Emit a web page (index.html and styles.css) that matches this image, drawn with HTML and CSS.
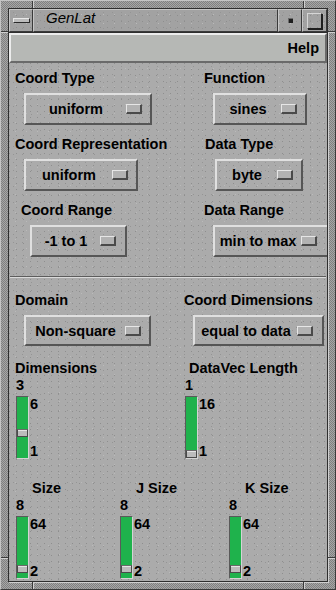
FILE: index.html
```html
<!DOCTYPE html>
<html lang="en">
<head>
	<meta charset="UTF-8">
	<title>GenLat</title>
	<link rel="stylesheet" href="styles.css">
</head>
<body>
<div class="window">
	<!-- resize handle marks on the frame -->
	<span class="notch notch-v nt-l"></span>
	<span class="notch notch-v nt-r"></span>
	<span class="notch notch-v nb-l"></span>
	<span class="notch notch-v nb-r"></span>
	<span class="notch notch-h nl-t"></span>
	<span class="notch notch-h nl-b"></span>
	<span class="notch notch-h nr-t"></span>
	<span class="notch notch-h nr-b"></span>

	<div class="titlebar">
		<div class="tb-item tb-menu"><span class="tb-bar"></span></div>
		<div class="tb-item tb-title">GenLat</div>
		<div class="tb-item tb-min"><span class="tb-dot"></span></div>
		<div class="tb-item tb-max"><span class="tb-box"></span></div>
	</div>

	<div class="client">
		<div class="menubar"><span class="menu-item">Help</span></div>

		<div class="panel">
			<div class="pair">
				<div class="field f-ctype">
					<div class="label">Coord Type</div>
					<div class="opt"><span class="opt-text">uniform</span><span class="ind"></span></div>
				</div>
				<div class="field f-func">
					<div class="label">Function</div>
					<div class="opt"><span class="opt-text">sines</span><span class="ind"></span></div>
				</div>
			</div>

			<div class="pair">
				<div class="field f-crep">
					<div class="label">Coord Representation</div>
					<div class="opt"><span class="opt-text">uniform</span><span class="ind"></span></div>
				</div>
				<div class="field f-dtype">
					<div class="label">Data Type</div>
					<div class="opt"><span class="opt-text">byte</span><span class="ind"></span></div>
				</div>
			</div>

			<div class="pair">
				<div class="field f-crange">
					<div class="label">Coord Range</div>
					<div class="opt"><span class="opt-text">-1 to 1</span><span class="ind"></span></div>
				</div>
				<div class="field f-drange">
					<div class="label">Data Range</div>
					<div class="opt"><span class="opt-text">min to max</span><span class="ind"></span></div>
				</div>
			</div>

			<div class="sep"></div>

			<div class="pair pair-after-sep">
				<div class="field f-domain">
					<div class="label">Domain</div>
					<div class="opt"><span class="opt-text">Non-square</span><span class="ind"></span></div>
				</div>
				<div class="field f-cdim">
					<div class="label">Coord Dimensions</div>
					<div class="opt"><span class="opt-text">equal to data</span><span class="ind"></span></div>
				</div>
			</div>

			<div class="pair-scales">
				<div class="sfield f-dims">
					<div class="label">Dimensions</div>
					<div class="sval">3</div>
					<div class="scale">
						<div class="trough"><span class="thumb" style="bottom:21px"></span></div>
						<div class="smarks"><span>6</span><span>1</span></div>
					</div>
				</div>
				<div class="sfield f-dvec">
					<div class="label">DataVec Length</div>
					<div class="sval">1</div>
					<div class="scale">
						<div class="trough"><span class="thumb" style="bottom:0px"></span></div>
						<div class="smarks"><span>16</span><span>1</span></div>
					</div>
				</div>
			</div>

			<div class="trio">
				<div class="sfield f-isize">
					<div class="label">Size</div>
					<div class="sval">8</div>
					<div class="scale">
						<div class="trough"><span class="thumb" style="bottom:5px"></span></div>
						<div class="smarks"><span>64</span><span>2</span></div>
					</div>
				</div>
				<div class="sfield f-jsize">
					<div class="label">J Size</div>
					<div class="sval">8</div>
					<div class="scale">
						<div class="trough"><span class="thumb" style="bottom:5px"></span></div>
						<div class="smarks"><span>64</span><span>2</span></div>
					</div>
				</div>
				<div class="sfield f-ksize">
					<div class="label">K Size</div>
					<div class="sval">8</div>
					<div class="scale">
						<div class="trough"><span class="thumb" style="bottom:5px"></span></div>
						<div class="smarks"><span>64</span><span>2</span></div>
					</div>
				</div>
			</div>
		</div>
	</div>
</div>
</body>
</html>
```

FILE: styles.css
```css
*{margin:0;padding:0;box-sizing:border-box;}
html,body{width:336px;height:590px;overflow:hidden;}
body{background:#8c8c8c;font:bold 14.5px/16px "Liberation Sans",Arial,sans-serif;color:#000;}

/* window frame */
.window{position:relative;width:336px;height:590px;padding:7px;border:1px solid;border-color:#c4c4c4 #3c3c3c #3c3c3c #c4c4c4;background:repeating-conic-gradient(#a6a6a6 0 25%,#808080 0 50%) 0 0/2px 2px;}
.notch{position:absolute;background:#3a3a3a;}
.notch-v{width:1px;height:7px;box-shadow:1px 0 0 #d0d0d0;}
.notch-h{width:7px;height:1px;box-shadow:0 1px 0 #d0d0d0;}
.nt-l{top:0;left:31px;}
.nt-r{top:0;left:302px;}
.nb-l{bottom:0;left:31px;}
.nb-r{bottom:0;left:302px;}
.nl-t{left:0;top:30px;}
.nl-b{left:0;top:556px;}
.nr-t{right:0;top:30px;}
.nr-b{right:0;top:556px;}

/* stipple used by title bar and panel */
.titlebar,.panel{background:
	conic-gradient(at 1px 1px,#0000 75%,#8e8e8e 0) 0 0/7px 6px,
	conic-gradient(at 1px 1px,#0000 75%,#959595 0) 4px 3px/9px 8px,
	conic-gradient(at 1px 1px,#0000 75%,#bababa 0) 6px 5px/11px 9px,
	#ababab;}

/* title bar */
.titlebar{display:flex;height:24px;border:1px solid #2e2e2e;border-bottom:0;background-color:#a2a2a2;}
.tb-item{border:1px solid;border-color:#c6c6c6 #3a3a3a #3a3a3a #c6c6c6;display:flex;align-items:center;justify-content:center;}
.tb-menu{width:24px;}
.tb-bar{width:17px;height:5px;background:#bdbdbd;border:1px solid;border-color:#e8e8e8 #2a2a2a #2a2a2a #e8e8e8;}
.tb-title{flex:1;justify-content:flex-start;align-items:flex-start;padding-left:12px;font:italic 15px/16px "Liberation Sans",Arial,sans-serif;}
.tb-min{width:24px;}
.tb-dot{width:5px;height:5px;background:#1e1e1e;border-top:1px solid #6a6a6a;border-left:1px solid #6a6a6a;}
.tb-max{width:25px;}
.tb-box{width:15px;height:16px;border:1px solid;border-color:#d6d6d6 #1e1e1e #1e1e1e #d6d6d6;box-shadow:1px 1px 0 #1e1e1e;}

/* client area */
.client{display:flex;flex-direction:column;height:550px;border:1px solid #2e2e2e;box-shadow:1px 1px 0 #cfcfcf;}
.menubar{flex:none;height:30px;display:flex;justify-content:flex-end;align-items:center;padding-right:6px;background:#b6b8b5;border:2px solid;border-color:#ececec #6a6a6a #6a6a6a #ececec;}

.panel{flex:1;overflow:hidden;padding:7px 0 0 6px;}

/* option menus */
.pair{display:grid;grid-template-columns:169px minmax(0,1fr);}
.pair + .pair{margin-top:11px;}
.field{display:flex;flex-direction:column;align-items:flex-start;gap:7px;}
.label{white-space:nowrap;}
.opt{flex:none;display:flex;align-items:center;height:32px;padding-right:8px;border:2px solid;border-color:#e0e0e0 #565656 #565656 #e0e0e0;white-space:nowrap;}
.opt-text{flex:1;text-align:center;}
.ind{flex:none;width:16px;height:10px;background:#b2b2b2;border-style:solid;border-width:1px 2px 2px 1px;border-color:#e6e6e6 #4a4a4a #4a4a4a #e6e6e6;}

.f-ctype .opt{margin-left:9px;width:128px;}
.f-func .label{margin-left:20px;}
.f-func .opt{margin-left:29px;width:94px;}
.f-crep .opt{margin-left:9px;width:114px;}
.f-dtype .label{margin-left:21px;}
.f-dtype .opt{margin-left:31px;width:88px;}
.f-crange .label{margin-left:6px;}
.f-crange .opt{margin-left:15px;width:97px;padding-right:9px;}
.f-drange .label{margin-left:20px;}
.f-drange .opt{margin-left:29px;width:116px;padding-right:10px;}
.f-domain .opt{margin-left:9px;width:127px;height:31px;}
.f-cdim .opt{margin-left:9px;width:131px;height:31px;padding-right:9px;}

.sep{height:2px;margin:19px 1px 0 -5px;border-top:1px solid #5c5c5c;border-bottom:1px solid #dadada;}
.pair.pair-after-sep{margin-top:14px;}

/* scales */
.pair-scales{display:grid;grid-template-columns:170px 1fr;margin-top:14px;}
.trio{display:grid;grid-template-columns:105px 109px 1fr;margin-top:21px;}
.sfield{display:flex;flex-direction:column;align-items:flex-start;}
.sval{margin:1px 0 3px;}
.scale{display:flex;}
.trough{position:relative;width:13px;height:63px;background:#1fb24c;border:1px solid;border-color:#5a5a5a #d4d4d4 #d4d4d4 #5a5a5a;}
.thumb{position:absolute;left:0;right:0;height:8px;background:#bcbcbc;border:1px solid #4a4a4a;border-top-color:#6a6a6a;box-shadow:inset 0 1px 0 #e4e4e4;}
.smarks{display:flex;flex-direction:column;justify-content:space-between;margin-left:1px;}

.f-dims .sval,.f-dims .scale{margin-left:1px;}
.f-dvec .label{margin-left:4px;}
.f-isize .label{margin-left:17px;}
.f-isize .sval,.f-isize .scale{margin-left:1px;}
.f-jsize .label,.f-ksize .label{margin-left:16px;}
```
